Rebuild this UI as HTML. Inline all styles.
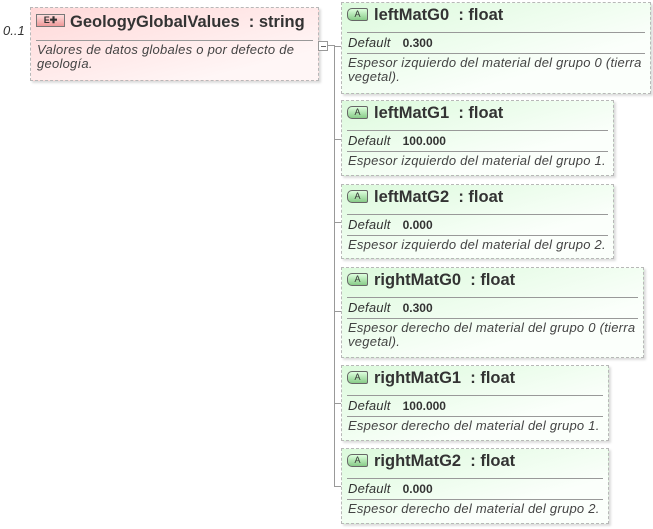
<!DOCTYPE html>
<html><head><style>
body{margin:0;width:653px;height:529px;background:#fff;position:relative;font-family:"Liberation Sans",sans-serif;overflow:hidden}
.b{position:absolute;border:1px dashed #b8b8b8;box-sizing:border-box;box-shadow:2px 2px 2px #ddd}
.g{background:linear-gradient(to bottom right,#dcfadc,#fbfffb 70%)}
.t{position:absolute;left:32px;top:3px;font-weight:bold;font-size:16.5px;color:#333;white-space:nowrap}
.ic{position:absolute;left:5px;top:5px;width:19px;height:11px;border:1px solid #666;border-radius:5px 2px 2px 5px;background:linear-gradient(#dfd,#8c8);font-size:9px;line-height:11px;text-align:center;color:#333}
.s{position:absolute;left:5px;right:5px;height:1px;background:#999}
.d{position:absolute;left:6px;font-size:13px;font-style:italic;color:#333;white-space:nowrap;letter-spacing:0.2px}
.v{font-style:normal;font-weight:bold;font-size:12px;margin-left:12px;letter-spacing:0}
.p{position:absolute;left:6px;right:2px;font-size:13px;font-style:italic;color:#444;line-height:14px;letter-spacing:0.25px}
.h{position:absolute;height:1px;background:#999}
</style></head><body>
<div style="position:absolute;left:3px;top:23px;font-size:13px;font-style:italic;color:#333">0..1</div>
<div class="b" style="left:30px;top:7px;width:289px;height:74px;background:linear-gradient(to bottom right,#ffd8d8,#fff6f6 80%)">
 <div style="position:absolute;left:5px;top:6px;width:27px;height:11px;border:1px solid #777;background:linear-gradient(#fdd,#e99);font-size:9px;line-height:11px;text-align:center;color:#333;font-weight:bold">E✚</div>
 <div class="t" style="left:39px;top:5px">GeologyGlobalValues&nbsp; : string</div>
 <div class="s" style="top:32px"></div>
 <div class="p" style="top:35px">Valores de datos globales o por defecto de geología.</div>
</div>
<div style="position:absolute;left:318px;top:41px;width:8px;height:8px;border:1px solid #999;background:#fff"><div style="position:absolute;left:2px;top:4px;width:5px;height:1px;background:#666"></div></div>
<div class="h" style="left:327px;top:45px;width:7px"></div>
<div style="position:absolute;left:334px;top:45px;width:1px;height:442px;background:#999"></div>

<div class="h" style="left:334px;top:46px;width:8px"></div>
<div class="b g" style="left:341px;top:2px;width:310px;height:92px"><div class="ic">A</div><div class="t">leftMatG0&nbsp; : float</div><div class="s" style="top:29px"></div><div class="d" style="top:32px">Default<span class="v">0.300</span></div><div class="s" style="top:50px"></div><div class="p" style="top:53px">Espesor izquierdo del material del grupo 0 (tierra vegetal).</div></div>

<div class="h" style="left:334px;top:139px;width:8px"></div>
<div class="b g" style="left:341px;top:100px;width:273px;height:76px"><div class="ic">A</div><div class="t">leftMatG1&nbsp; : float</div><div class="s" style="top:29px"></div><div class="d" style="top:32px">Default<span class="v">100.000</span></div><div class="s" style="top:50px"></div><div class="p" style="top:53px">Espesor izquierdo del material del grupo 1.</div></div>

<div class="h" style="left:334px;top:222px;width:8px"></div>
<div class="b g" style="left:341px;top:184px;width:273px;height:75px"><div class="ic">A</div><div class="t">leftMatG2&nbsp; : float</div><div class="s" style="top:29px"></div><div class="d" style="top:32px">Default<span class="v">0.000</span></div><div class="s" style="top:50px"></div><div class="p" style="top:53px">Espesor izquierdo del material del grupo 2.</div></div>

<div class="h" style="left:334px;top:311px;width:8px"></div>
<div class="b g" style="left:341px;top:267px;width:303px;height:91px"><div class="ic">A</div><div class="t">rightMatG0&nbsp; : float</div><div class="s" style="top:29px"></div><div class="d" style="top:32px">Default<span class="v">0.300</span></div><div class="s" style="top:50px"></div><div class="p" style="top:53px">Espesor derecho del material del grupo 0 (tierra vegetal).</div></div>

<div class="h" style="left:334px;top:403px;width:8px"></div>
<div class="b g" style="left:341px;top:365px;width:268px;height:76px"><div class="ic">A</div><div class="t">rightMatG1&nbsp; : float</div><div class="s" style="top:29px"></div><div class="d" style="top:32px">Default<span class="v">100.000</span></div><div class="s" style="top:50px"></div><div class="p" style="top:53px">Espesor derecho del material del grupo 1.</div></div>

<div class="h" style="left:334px;top:486px;width:8px"></div>
<div class="b g" style="left:341px;top:448px;width:268px;height:76px"><div class="ic">A</div><div class="t">rightMatG2&nbsp; : float</div><div class="s" style="top:29px"></div><div class="d" style="top:32px">Default<span class="v">0.000</span></div><div class="s" style="top:50px"></div><div class="p" style="top:53px">Espesor derecho del material del grupo 2.</div></div>
</body></html>
